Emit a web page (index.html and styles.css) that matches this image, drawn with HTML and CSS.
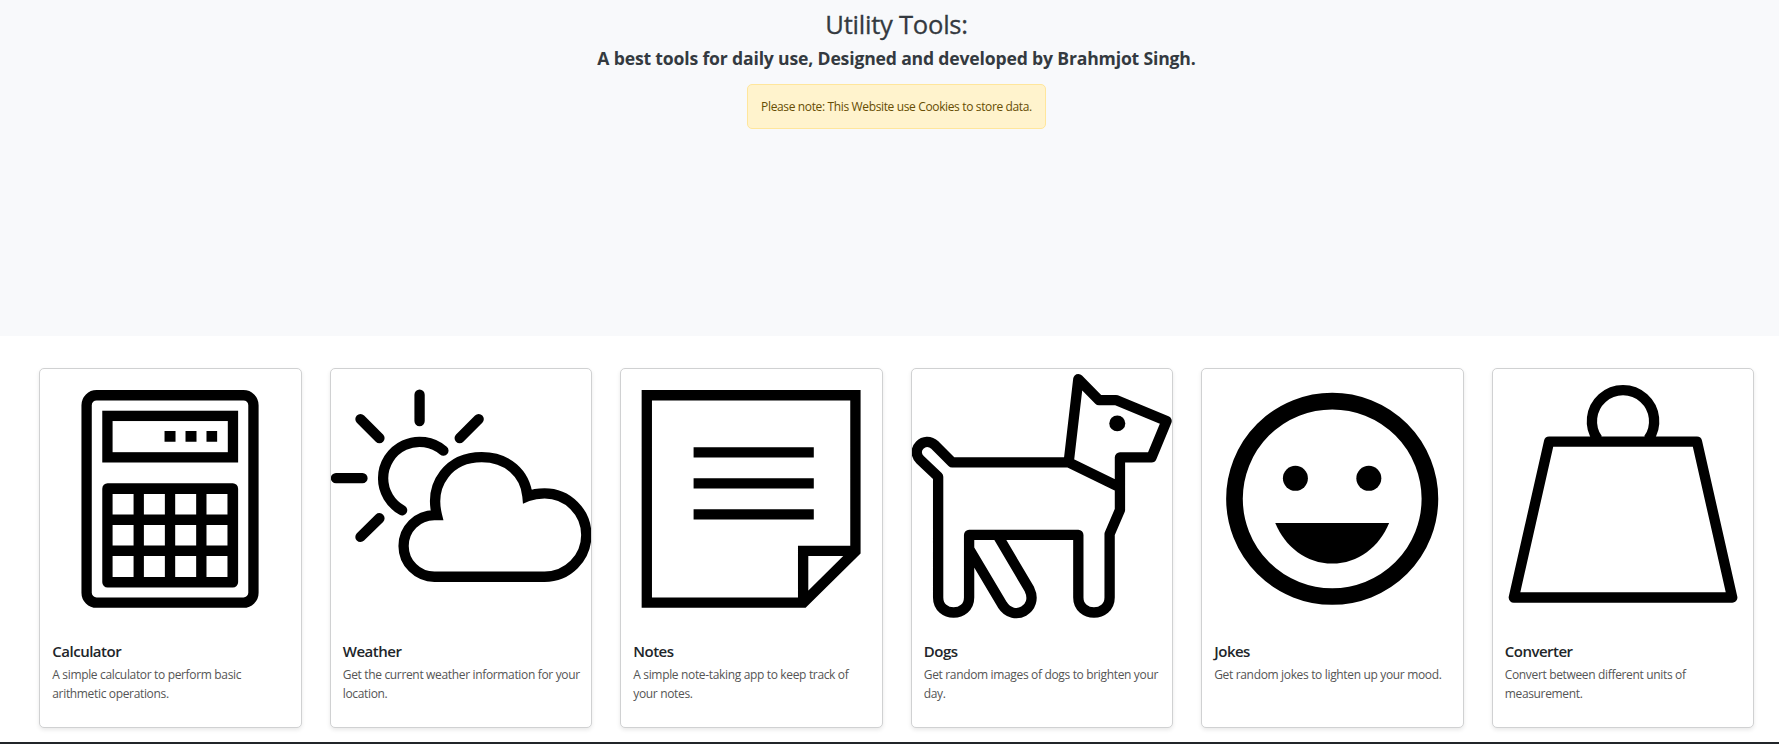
FILE: index.html
```html
<!DOCTYPE html>
<html lang="en">
<head>
<meta charset="utf-8">
<title>Utility Tools</title>
<link rel="stylesheet" href="styles.css">
</head>
<body>
<header class="hero">
  <h1 class="hero-title">Utility Tools:</h1>
  <p class="hero-sub">A best tools for daily use, Designed and developed by Brahmjot Singh.</p>
  <div class="alert">Please note: This Website use Cookies to store data.</div>
</header>
<main class="tools">
  <a class="card">
    <svg class="card-icon" viewBox="31 27 782 782">
      <rect x="171" y="105.500" width="501" height="623" rx="30" class="line"/>
      <rect x="233.500" y="167.500" width="377" height="124.500" class="line"/>
      <path d="M405 213h33v32h-33zM468 213h33v32h-33zM531 213h32v32h-32z"/>
      <path fill-rule="evenodd" d="M234 370h376a16 16 0 0 1 16 16v281a16 16 0 0 1-16 16H234a16 16 0 0 1-16-16V386a16 16 0 0 1 16-16zM249 402v62h63v-62zM343 402v62h63v-62zM437 402v62h63v-62zM531 402v62h63v-62zM249 495v62h63v-62zM343 495v62h63v-62zM437 495v62h63v-62zM531 495v62h63v-62zM249 588v63h63v-63zM343 588v63h63v-63zM437 588v63h63v-63zM531 588v63h63v-63z"/>
    </svg>
    <div class="card-body"><h2 class="card-title">Calculator</h2><p class="card-text">A simple calculator to perform basic<br>arithmetic operations.</p></div>
  </a>
  <a class="card">
    <svg class="card-icon" viewBox="32.500 27 782 782">
      <path class="line round" d="M298.500 104v79M121 177l57 57M476 177l-57 57M47.500 354.500H127M178 475l-57 56M370 272A109.500 109.500 0 0 0 189 355A109.500 109.500 0 0 0 246 451"/>
      <path class="line sharp" d="M343 650.500a92.500 92.500 0 0 1 0-185h7.500C327 370 388 291.500 485 291.500C562 291.500 616 340 622.500 409C640 402 657 400 674 400a125 125 0 0 1 0 250.500z"/>
    </svg>
    <div class="card-body"><h2 class="card-title">Weather</h2><p class="card-text">Get the current weather information for your location.</p></div>
  </a>
  <a class="card">
    <svg class="card-icon" viewBox="34 27 782 782">
      <path class="line" d="M111.500 105.500H738V574L582 728.500H111.500zM738 573H581v155M252 277h361M252 370h361M252 463.500h361"/>
    </svg>
    <div class="card-body"><h2 class="card-title">Notes</h2><p class="card-text">A simple note-taking app to keep track of your notes.</p></div>
  </a>
  <a class="card">
    <svg class="card-icon" viewBox="35.500 27 782 782">
      <path class="line round" d="M506 307H156L105 256C72 225 30 270 60 299L114 350V713C114 773 207 773 207 713V525H535V713C535 773 629 773 629 713V522L660 450V292H755L800 183L648 120H597L535 57L506 307L660 382M207 567L307 735C341 788 417 748 388 688L297 534"/>
      <circle cx="652" cy="190" r="24"/>
    </svg>
    <div class="card-body"><h2 class="card-title">Dogs</h2><p class="card-text">Get random images of dogs to brighten your day.</p></div>
  </a>
  <a class="card">
    <svg class="card-icon soft" viewBox="37 27 782 782">
      <circle cx="428" cy="416.500" r="293.500" class="line thick"/>
      <circle cx="317.500" cy="355" r="37.500"/><circle cx="538" cy="355" r="37.500"/>
      <path d="M257 489H599C570 560 506 611 428 611S286 560 257 489z"/>
    </svg>
    <div class="card-body"><h2 class="card-title">Jokes</h2><p class="card-text">Get random jokes to lighten up your mood.</p></div>
  </a>
  <a class="card">
    <svg class="card-icon" viewBox="38.500 27 782 782">
      <path class="line round" d="M207 245H651L757 713H101z"/>
      <path class="line" d="M353 238A93.500 93.500 0 1 1 505 238"/>
    </svg>
    <div class="card-body"><h2 class="card-title">Converter</h2><p class="card-text">Convert between different units of measurement.</p></div>
  </a>
</main>
<footer class="footer"></footer>
</body>
</html>
```
FILE: styles.css
```css
* { box-sizing: border-box; }
html, body { height: 100%; }
body {
  margin: 0;
  overflow: hidden;
  display: flex;
  flex-direction: column;
  background: #fff;
  color: #212529;
  font: 12.8px/19.2px "Open Sans", "Noto Sans", sans-serif;
}
.hero {
  flex: none;
  height: 336px;
  padding: 9px 0 0 14px;
  display: flex;
  flex-direction: column;
  align-items: center;
  background: #f8f9fb;
  color: #343a40;
}
.hero-title { margin: 0; font-size: 25.6px; line-height: 31px; font-weight: 500; letter-spacing: -0.25px; -webkit-text-stroke: .3px #343a40; }
.hero-sub { margin: 5px 0 0; font-size: 17.6px; line-height: 26px; font-weight: 700; letter-spacing: -0.17px; }
.alert {
  margin-top: 13px;
  padding: 12px 13px;
  border: 1px solid #ffe69c;
  border-radius: 5px;
  background: #fff3cd;
  color: #664d03;
  font-size: 12px;
  letter-spacing: -0.36px;
  white-space: nowrap;
}
.tools {
  flex: none;
  display: grid;
  grid-template-columns: repeat(6, 262.4px);
  gap: 28.1px;
  padding: 32px 0 14px 39.3px;
}
.card {
  height: 360px;
  display: flex;
  flex-direction: column;
  border: 1px solid #d0d1d2;
  border-radius: 5px;
  background: #fff;
  box-shadow: 0 2px 4px rgba(0, 0, 0, .09);
}
.card-icon { display: block; width: 100%; height: 260.6px; flex: none; }
.line { fill: none; stroke: #000; stroke-width: 31; }
.round { stroke-linecap: round; stroke-linejoin: round; }
.sharp { stroke-linejoin: miter; }
.thick { stroke-width: 50; }
.soft { filter: blur(.6px); }
.card-body { padding: 11px 8px 0 12px; }
.card-title { margin: 0; font-size: 15px; line-height: 20px; font-weight: 600; letter-spacing: -0.5px; }
.card-text { margin: 4px 0 0; font-size: 12px; line-height: 19px; color: #555; letter-spacing: -0.34px; }
.footer { flex: 1; background: #212529; }
```
